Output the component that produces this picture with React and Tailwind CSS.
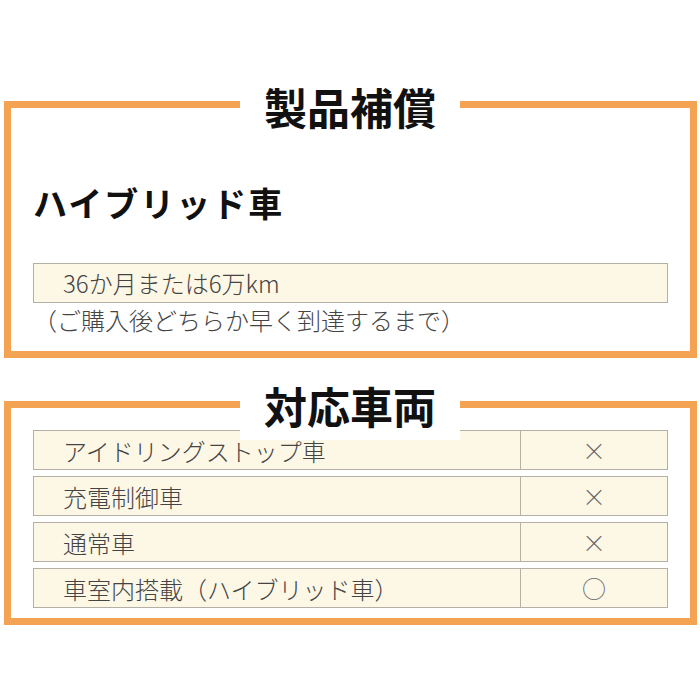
import React from "react";

const JP = { fontFamily: '"Noto Sans CJK JP", "Noto Sans", sans-serif' };

function Row({ label, mark }) {
  return (
    <div className="flex h-[40px] border border-[#b5b0a6] bg-[#fdf7e6]">
      <div className="flex w-[487px] items-center border-r border-[#b5b0a6] pl-[29px] pt-[2px] text-[24px] font-light text-[#444]">
        {label}
      </div>
      <div className="flex flex-1 items-center justify-center text-[24px] font-light text-[#666]">
        {mark}
      </div>
    </div>
  );
}

export default function App() {
  return (
    <div className="min-h-[700px] w-[700px] bg-white" style={JP}>
      <div className="pt-[101px] pl-[4px]">
        <div className="relative w-[693px] border-[7px] border-[#f4a352] px-[22px] pt-[78px] pb-[16px]">
          <div className="absolute left-[229px] top-[-24px] flex h-[44px] w-[220px] items-center justify-center bg-white text-[43px] font-bold leading-none text-[#111]">
            製品補償
          </div>
          <div className="text-[34px] font-bold leading-none tracking-[2px] text-[#111]">
            ハイブリッド車
          </div>
          <div className="mt-[43px] flex h-[40px] items-center border border-[#b5b0a6] bg-[#fdf7e6] pl-[29px] text-[24px] font-light text-[#444]">
            36か月または6万km
          </div>
          <div className="mt-[2px] text-[24px] font-light leading-[30px] text-[#444]">
            （ご購入後どちらか早く到達するまで）
          </div>
        </div>
      </div>
      <div className="pt-[43px] pl-[4px]">
        <div className="relative w-[693px] border-[7px] border-[#f4a352] px-[22px] pt-[22px] pb-[10px]">
          <div className="flex flex-col gap-[6px]">
            <Row label="アイドリングストップ車" mark="×" />
            <Row label="充電制御車" mark="×" />
            <Row label="通常車" mark="×" />
            <Row label="車室内搭載（ハイブリッド車）" mark="○" />
          </div>
          <div className="absolute left-[229px] top-[-26px] flex h-[58px] w-[220px] items-start justify-center bg-white pt-[2px] text-[43px] font-bold leading-none text-[#111]">
            対応車両
          </div>
        </div>
      </div>
    </div>
  );
}
